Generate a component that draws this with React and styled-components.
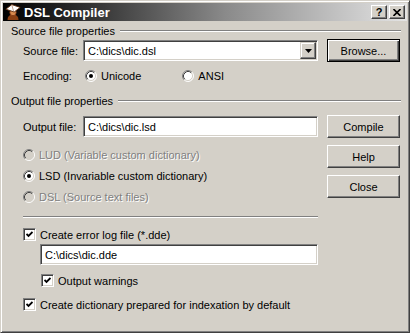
import React from 'react';
import styled, { createGlobalStyle } from 'styled-components';

const Global = createGlobalStyle`
  html, body { margin: 0; padding: 0; background: #d4d0c8; }
  body { font-family: "Liberation Sans", Arial, sans-serif; font-size: 11px; color: #000; }
  * { box-sizing: border-box; }
`;

const Window = styled.div`
  width: 410px;
  height: 333px;
  background: #d4d0c8;
  border: 1px solid;
  border-color: #d4d0c8 #404040 #404040 #d4d0c8;
  box-shadow: inset 1px 1px 0 #fff, inset -1px -1px 0 #808080;
  padding: 2px;
  display: flex;
  flex-direction: column;
`;

const TitleBar = styled.div`
  height: 18px;
  flex: none;
  display: flex;
  align-items: center;
  padding: 0 2px 0 2px;
  background: linear-gradient(to right, #000 0%, #3a3a3a 25%, #8a8a8a 55%, #e4e4e4 100%);
`;

const TitleText = styled.span`
  color: #fff;
  font-weight: bold;
  font-size: 13px;
  margin-left: 3px;
  flex: 1;
`;

const CaptionButton = styled.button`
  width: 16px;
  height: 14px;
  padding: 0;
  margin-left: ${p => p.$gap}px;
  background: #d4d0c8;
  border: 1px solid;
  border-color: #fff #404040 #404040 #fff;
  box-shadow: inset -1px -1px 0 #808080, inset 1px 1px 0 #d4d0c8;
  display: flex;
  align-items: center;
  justify-content: center;
  font-family: "Liberation Sans", Arial, sans-serif;
  font-weight: bold;
  font-size: 11px;
  line-height: 1;
  color: #000;
`;

const Content = styled.div`
  flex: 1;
  display: flex;
  flex-direction: column;
  padding: 3px 6px 0 8px;
`;

const GroupHeader = styled.div`
  display: flex;
  align-items: center;
  height: 13px;
  margin-top: ${p => p.$mt || 0}px;
  gap: 5px;
`;

const Etched = styled.div`
  flex: 1;
  height: 2px;
  border-top: 1px solid #808080;
  border-bottom: 1px solid #fff;
`;

const Row = styled.div`
  display: flex;
  align-items: center;
  height: ${p => p.$h}px;
  margin-top: ${p => p.$mt || 0}px;
  margin-left: ${p => p.$ml || 0}px;
`;

const Label = styled.span`
  width: 60px;
  flex: none;
  white-space: nowrap;
`;

const Field = styled.div`
  position: relative;
  width: ${p => p.$w}px;
  height: 21px;
  flex: none;
  background: #fff;
  border: 1px solid;
  border-color: #808080 #fff #fff #808080;
  box-shadow: inset 1px 1px 0 #404040, inset -1px -1px 0 #d4d0c8;
  display: flex;
  align-items: center;
  padding-left: 4px;
  white-space: nowrap;
`;

const DropButton = styled.div`
  position: absolute;
  right: 1px;
  top: 1px;
  width: 16px;
  height: 17px;
  background: #d4d0c8;
  border: 1px solid;
  border-color: #d4d0c8 #404040 #404040 #d4d0c8;
  box-shadow: inset -1px -1px 0 #808080, inset 1px 1px 0 #fff;
  display: flex;
  align-items: center;
  justify-content: center;
`;

const PushButton = styled.button`
  width: 73px;
  height: 23px;
  flex: none;
  margin-left: ${p => p.$ml || 0}px;
  padding: 0;
  background: #d4d0c8;
  border: 1px solid;
  border-color: ${p => (p.$default ? '#000' : '#fff #404040 #404040 #fff')};
  box-shadow: ${p =>
    p.$default
      ? 'inset 1px 1px 0 #fff, inset -1px -1px 0 #404040, inset -2px -2px 0 #808080'
      : 'inset -1px -1px 0 #808080, inset 1px 1px 0 #d4d0c8'};
  font-family: "Liberation Sans", Arial, sans-serif;
  font-size: 11px;
  color: #000;
`;

const Option = styled.label`
  display: flex;
  align-items: center;
  gap: ${p => p.$gap || 4}px;
  height: ${p => p.$h || 21}px;
  margin-left: ${p => p.$ml || 0}px;
  margin-top: ${p => p.$mt || 0}px;
  white-space: nowrap;
  color: ${p => (p.$disabled ? '#808080' : '#000')};
  text-shadow: ${p => (p.$disabled ? '1px 1px 0 #fff' : 'none')};
`;

const OutputArea = styled.div`
  display: flex;
  margin-top: 8px;
`;

const LeftCol = styled.div`
  width: 307px;
  padding-left: 12px;
  display: flex;
  flex-direction: column;
`;

const RightCol = styled.div`
  margin-left: 9px;
  display: flex;
  flex-direction: column;
  gap: 7px;
`;

const Separator = styled.div`
  height: 2px;
  margin-top: 9px;
  border-top: 1px solid #808080;
  border-bottom: 1px solid #fff;
`;

const CheckBoxBox = styled.span`
  width: 13px;
  height: 13px;
  flex: none;
  background: #fff;
  border: 1px solid;
  border-color: #808080 #fff #fff #808080;
  box-shadow: inset 1px 1px 0 #404040, inset -1px -1px 0 #d4d0c8;
  display: flex;
  align-items: center;
  justify-content: center;
`;

const Radio = ({ checked, disabled }) => (
  <svg width="12" height="12" viewBox="0 0 12 12" style={{ flex: 'none' }}>
    <circle cx="6" cy="6" r="5" fill={disabled ? '#d4d0c8' : '#fff'} />
    <path d="M2.11 9.89 A5.5 5.5 0 0 1 9.89 2.11" fill="none" stroke="#808080" />
    <path d="M9.89 2.11 A5.5 5.5 0 0 1 2.11 9.89" fill="none" stroke="#fff" />
    <path d="M2.82 9.18 A4.5 4.5 0 0 1 9.18 2.82" fill="none" stroke="#404040" />
    <path d="M9.18 2.82 A4.5 4.5 0 0 1 2.82 9.18" fill="none" stroke="#d4d0c8" />
    {checked && <circle cx="6" cy="6" r="2" fill="#000" />}
  </svg>
);

const CheckBox = () => (
  <CheckBoxBox>
    <svg width="7" height="7" viewBox="0 0 7 7">
      <polyline points="0.5,3 2.5,5 6.5,1" fill="none" stroke="#000" strokeWidth="1.8" />
    </svg>
  </CheckBoxBox>
);

const AppIcon = () => (
  <svg width="16" height="16" viewBox="0 0 16 16" style={{ flex: 'none' }}>
    <path d="M2.5 16 Q2.5 10.5 8 10.5 Q13.5 10.5 13.5 16 Z" fill="#8a3f12" />
    <circle cx="8" cy="8.5" r="3.2" fill="#d98a4e" stroke="#7a3510" strokeWidth="0.8" />
    <path d="M0.8 5.2 L6.8 0.6 L15.2 3.4 L9.2 8 Z" fill="#fff" stroke="#5a2a0a" strokeWidth="0.9" />
    <path d="M6.8 0.8 L8.6 7.4" stroke="#b08060" strokeWidth="0.7" />
  </svg>
);

export default function App() {
  return (
    <>
      <Global />
      <Window>
        <TitleBar>
          <AppIcon />
          <TitleText>DSL Compiler</TitleText>
          <CaptionButton $gap={0}>?</CaptionButton>
          <CaptionButton $gap={2}>
            <svg width="8" height="7" viewBox="0 0 8 7">
              <path d="M0.5 0 L7.5 7 M7.5 0 L0.5 7" stroke="#000" strokeWidth="1.6" />
            </svg>
          </CaptionButton>
        </TitleBar>
        <Content>
          <GroupHeader>
            <span>Source file properties</span>
            <Etched />
          </GroupHeader>
          <Row $h={23} $mt={2} $ml={12}>
            <Label>Source file:</Label>
            <Field $w={235}>
              C:\dics\dic.dsl
              <DropButton>
                <svg width="7" height="4" viewBox="0 0 7 4">
                  <path d="M0 0 L7 0 L3.5 4 Z" fill="#000" />
                </svg>
              </DropButton>
            </Field>
            <PushButton $default $ml={9}>Browse...</PushButton>
          </Row>
          <Row $h={14} $mt={7} $ml={12}>
            <Label>Encoding:</Label>
            <Option $h={14} $ml={2}>
              <Radio checked />
              Unicode
            </Option>
            <Option $h={14} $ml={41}>
              <Radio />
              ANSI
            </Option>
          </Row>
          <GroupHeader $mt={11}>
            <span>Output file properties</span>
            <Etched />
          </GroupHeader>
          <OutputArea>
            <LeftCol>
              <Row $h={23}>
                <Label>Output file:</Label>
                <Field $w={235}>C:\dics\dic.lsd</Field>
              </Row>
              <Option $disabled $mt={6}>
                <Radio disabled />
                LUD (Variable custom dictionary)
              </Option>
              <Option>
                <Radio checked />
                LSD (Invariable custom dictionary)
              </Option>
              <Option $disabled>
                <Radio disabled />
                DSL (Source text files)
              </Option>
              <Separator />
              <Option $h={13} $mt={10}>
                <CheckBox />
                Create error log file (*.dde)
              </Option>
              <Row $h={21} $mt={3} $ml={17}>
                <Field $w={278}>C:\dics\dic.dde</Field>
              </Row>
              <Option $h={13} $mt={9} $ml={18}>
                <CheckBox />
                Output warnings
              </Option>
              <Option $h={13} $mt={11}>
                <CheckBox />
                Create dictionary prepared for indexation by default
              </Option>
            </LeftCol>
            <RightCol>
              <PushButton>Compile</PushButton>
              <PushButton>Help</PushButton>
              <PushButton>Close</PushButton>
            </RightCol>
          </OutputArea>
        </Content>
      </Window>
    </>
  );
}
